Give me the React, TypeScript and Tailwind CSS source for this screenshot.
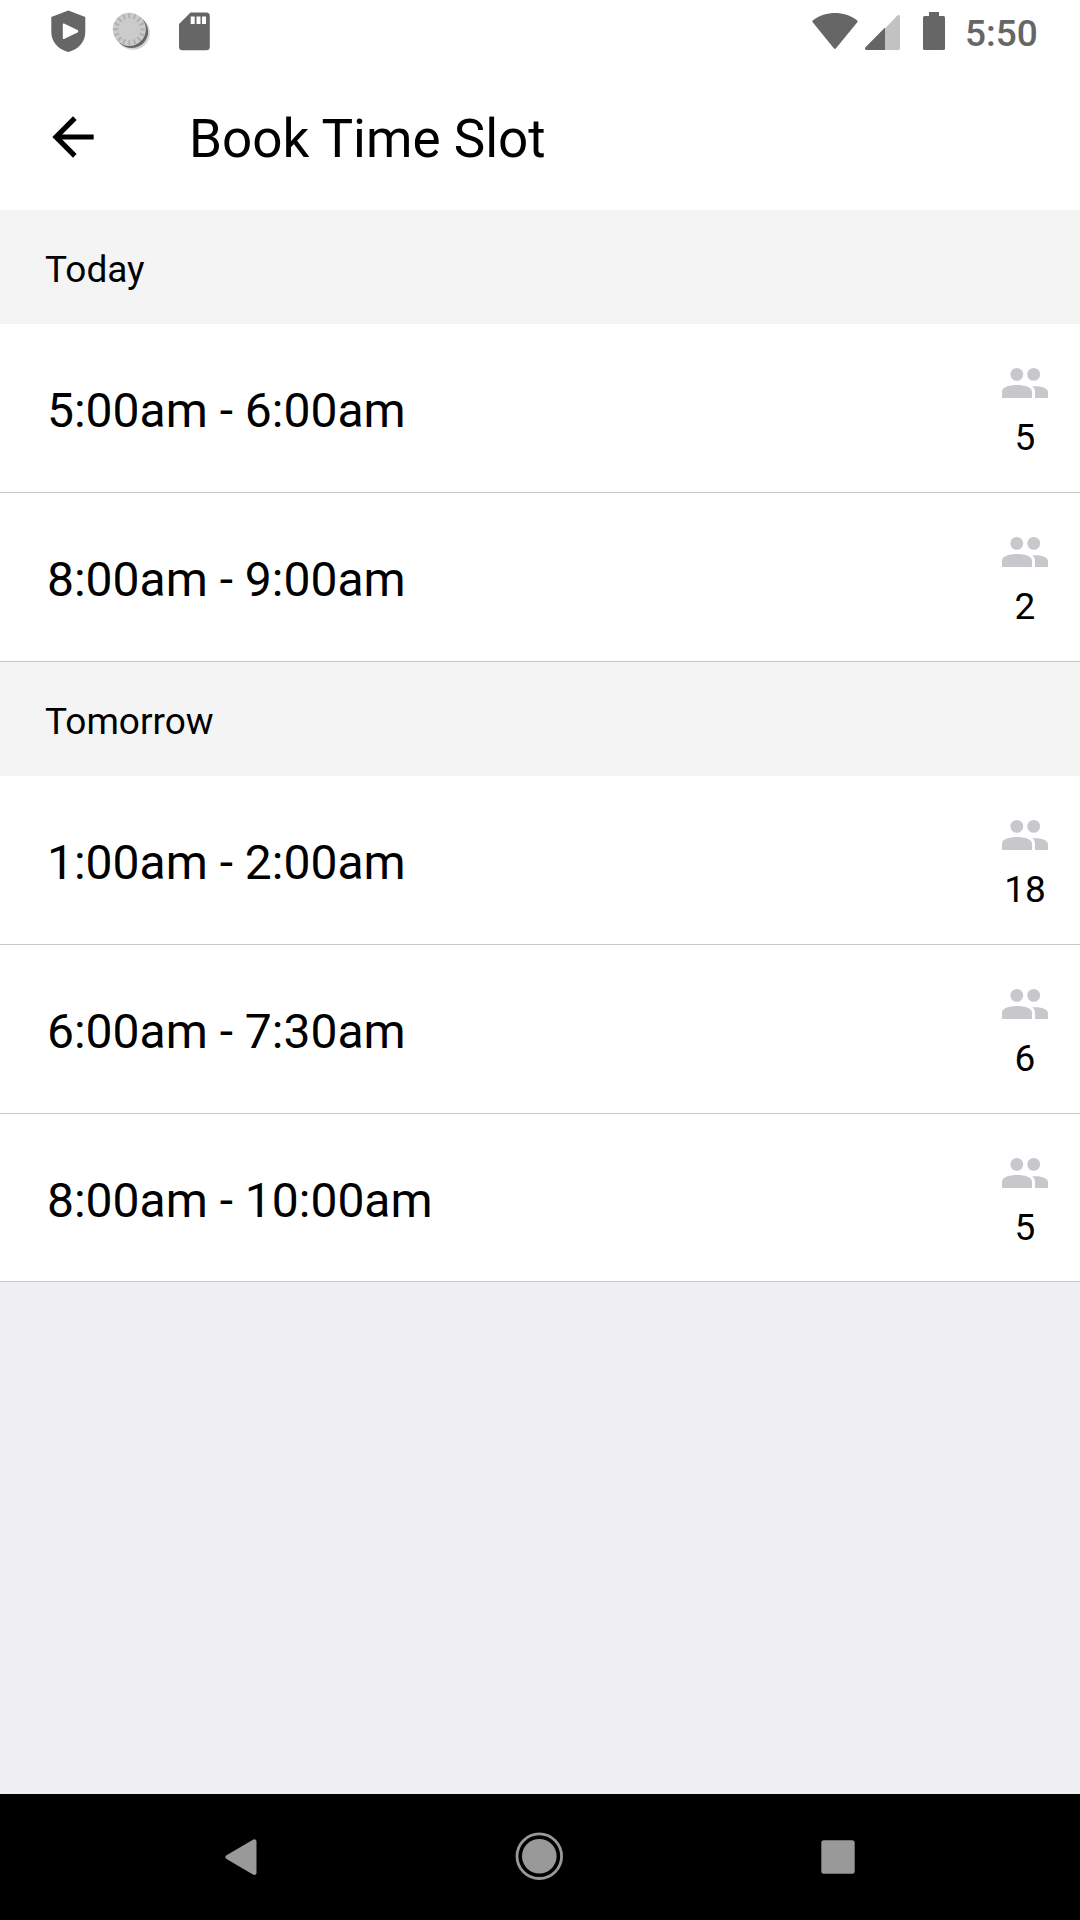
type Slot = { time: string; people: number };

const sections: { title: string; slots: Slot[] }[] = [
  {
    title: "Today",
    slots: [
      { time: "5:00am - 6:00am", people: 5 },
      { time: "8:00am - 9:00am", people: 2 },
    ],
  },
  {
    title: "Tomorrow",
    slots: [
      { time: "1:00am - 2:00am", people: 18 },
      { time: "6:00am - 7:30am", people: 6 },
      { time: "8:00am - 10:00am", people: 5 },
    ],
  },
];

const ticks = Array.from({ length: 16 }, (_, i) => i * 22.5);

function PeopleIcon() {
  return (
    <svg width="46" height="30" viewBox="0 0 46 30" fill="#c8c7cc" className="shrink-0">
      <circle cx="14.8" cy="6.4" r="6.4" />
      <circle cx="31.7" cy="6.4" r="6.4" />
      <path d="M0 30v-6.5C0 19 8 17 15 17s15 2 15 6.5V30z" />
      <path d="M30 18.3C38 17.8 46 19.5 46 24v6H33v-6.5c0-2.2-1-3.9-3-5.2z" />
    </svg>
  );
}

function StatusBar() {
  return (
    <div className="flex h-[63px] justify-between text-[#666]">
      <svg width="240" height="63" viewBox="0 0 240 63" fill="currentColor">
        <path d="M68.3 10.5 85.3 17v15c0 10-7 17.5-17 20-10-2.5-17-10-17-20V17z" />
        <path d="M64 23.6 77.5 30c1 .7 1 1.8 0 2.5L64 39c-.8.3-1.2 0-1.2-.8V24.4c0-.8.4-1.1 1.2-.8z" fill="#fff" />
        <circle cx="133" cy="33" r="16.8" fill="#d4d4d4" />
        <circle cx="131.5" cy="31.5" r="16.6" fill="#666" />
        <circle cx="129.3" cy="29.3" r="16.6" fill="#cbcbcb" />
        {ticks.map((deg) => (
          <path
            key={deg}
            d="M129.3 13.3v5"
            stroke="#adadad"
            strokeWidth="1.8"
            transform={`rotate(${deg} 129.3 29.3)`}
          />
        ))}
        <path
          fillRule="evenodd"
          d="M190.5 12.5h15.8a3.5 3.5 0 0 1 3.5 3.5v30.8a3.5 3.5 0 0 1-3.5 3.5h-23.8a3.5 3.5 0 0 1-3.500-3.500V24zM190.700 16.500v7.500h4v-7.500zM196.500 16.500v7.500h4v-7.500zM202 16.500v7.500h4v-7.500z"
        />
      </svg>
      <div className="flex">
        <svg width="148" height="63" viewBox="804 0 148 63" fill="currentColor">
          <path d="M813 20.200c13-9.500 31-9.500 44 0 .7.500.8 1.300.3 2L836 48.200c-.7.900-1.500.9-2.200 0L812.700 22.200c-.5-.7-.4-1.500.3-2z" />
          <path d="M885 28.500 897.300 15.600c1.100-1.100 2.700-.5 2.700 1v31.600a1.800 1.800 0 0 1-1.800 1.800H885z" fill="#c2c2c2" />
          <path d="M885 27.500V50h-18.500c-1.600 0-2.100-1.700-1-2.800z" />
          <path d="M929 12h10v4h4.500a1.500 1.500 0 0 1 1.500 1.500v31a1.500 1.500 0 0 1-1.500 1.500h-19a1.500 1.500 0 0 1-1.500-1.500v-31a1.500 1.500 0 0 1 1.500-1.500h4.500z" />
        </svg>
        <span className="w-[128px] pl-[13px] pt-3 text-[37px] font-medium leading-[44px]">5:50</span>
      </div>
    </div>
  );
}

function Header() {
  return (
    <header className="flex h-[147px] items-center pl-[42px]">
      <svg width="62" height="62" viewBox="0 0 24 24" className="shrink-0">
        <path d="M20 11H7.830l5.590-5.590L12 4l-8 8 8 8 1.410-1.410L7.830 13H20v-2z" />
      </svg>
      <h1 className="pl-[85px] pt-[5px] text-[53px] leading-[62px]">Book Time Slot</h1>
    </header>
  );
}

function SlotRow({ slot }: { slot: Slot }) {
  return (
    <li className="flex h-[169px] justify-between border-b border-[#c8c7cc] bg-white pl-[47px] group-last:last:h-[168px]">
      <span className="pt-[59px] text-[48px] leading-[56px]">{slot.time}</span>
      <div className="flex w-[110px] flex-col items-center pt-11">
        <PeopleIcon />
        <span className="pt-[18px] text-[37px] leading-[44px]">{slot.people}</span>
      </div>
    </li>
  );
}

function NavBar() {
  return (
    <nav className="h-[126px] bg-black">
      <svg width="1080" height="126" viewBox="0 1794 1080 126" fill="#999">
        <path d="M226.500 1855.300 252.500 1839.900c2.300-1.300 4-.4 4 1.800v30.800c0 2.200-1.700 3.100-4 1.800L226.500 1858.900c-1.600-1-1.600-2.600 0-3.600z" />
        <circle cx="539.300" cy="1856.200" r="17.300" />
        <circle cx="539.300" cy="1856.200" r="22.300" fill="none" stroke="#999" strokeWidth="2.800" />
        <rect x="821.300" y="1840.300" width="33.400" height="33.400" rx="2.500" />
      </svg>
    </nav>
  );
}

export default function App() {
  return (
    <div className="flex h-[1920px] w-[1080px] flex-col overflow-hidden bg-[#efeff4] font-['Roboto',sans-serif] text-black">
      <div className="bg-white">
        <StatusBar />
        <Header />
      </div>
      <main className="flex-1">
        {sections.map((section) => (
          <section key={section.title} className="group">
            <h2 className="flex h-[114px] items-center bg-[#f4f4f4] pl-[45px] pt-[6px] text-[37px] leading-[44px]">
              {section.title}
            </h2>
            <ul>
              {section.slots.map((slot) => (
                <SlotRow key={slot.time} slot={slot} />
              ))}
            </ul>
          </section>
        ))}
      </main>
      <NavBar />
    </div>
  );
}
